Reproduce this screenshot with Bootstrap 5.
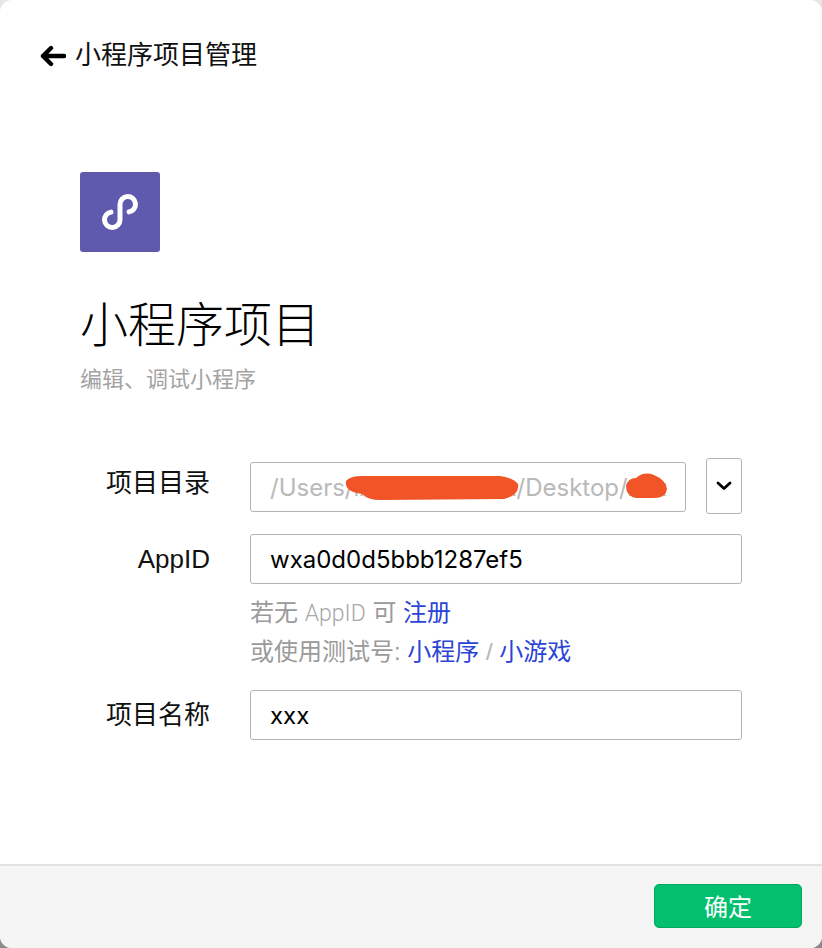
<!DOCTYPE html>
<html lang="zh-CN">
<head>
    <meta charset="UTF-8">
    <title>小程序项目管理</title>
    <meta name="viewport" content="width=device-width, initial-scale=1">
    <link href="https://cdn.jsdelivr.net/npm/bootstrap@5.3.0/dist/css/bootstrap.min.css" rel="stylesheet">
    <style>
        html, body {
            height: 100%;
        }
        body {
            background: linear-gradient(#e6e6e6 60%, #8a8a8a 100%);
            font-family: "Liberation Sans", "Noto Sans CJK SC", sans-serif;
            color: #000;
            overflow: hidden;
        }
        .app-window {
            height: 948px;
            background: #fff;
            border-radius: 12px;
            overflow: hidden;
        }
        .top-head {
            height: 108px;
            padding: 39px 0 0 40px;
            font-size: 26px;
            line-height: 32px;
            color: #111;
        }
        .top-head svg {
            width: 26px;
            height: 22px;
            margin: 6px 9px 0 0;
        }
        .hero {
            padding: 64px 0 0 80px;
        }
        .logo-tile {
            width: 80px;
            height: 80px;
            background: #5f5aad;
            border-radius: 3px;
        }
        .hero-title {
            font-size: 48px;
            line-height: 60px;
            font-weight: 300;
            margin: 44px 0 0;
        }
        .hero-sub {
            font-size: 22px;
            line-height: 30px;
            color: #a3a3a3;
            margin: 9px 0 0;
        }
        .form-area {
            padding: 64px 80px 0 0;
        }
        .field-row {
            min-height: 56px;
        }
        .field-label {
            width: 210px;
            margin: 0 40px 0 0;
            font-size: 26px;
            text-align: right;
            flex: none;
            color: #111;
        }
        .form-control.field-input {
            height: 50px;
            padding: 0 19px;
            font-family: Inter, "Noto Sans CJK SC", sans-serif;
            font-size: 24px;
            color: #000;
            border-color: #b4b4b4;
            border-radius: 3px;
            box-shadow: none;
        }
        .form-control.field-input:disabled {
            background: #fff;
            color: #b9b9b9;
            opacity: 1;
        }
        .path-box {
            width: 436px;
        }
        .scribble {
            position: absolute;
            left: 0;
            top: 0;
            width: 436px;
            height: 50px;
        }
        .drop-btn {
            width: 36px;
            height: 56px;
            margin: -1px 0 1px 20px;
            padding: 0;
            border: 1px solid #b4b4b4;
            border-radius: 3px;
            background: #fff;
        }
        .drop-btn svg {
            display: block;
            width: 16px;
            height: 10px;
            margin: 0 auto;
        }
        .hint-block {
            margin: 7px 0 16px 250px;
            font-size: 24px;
            line-height: 38px;
            color: #9a9a9a;
        }
        .hint-thin {
            font-family: Roboto, sans-serif;
            font-weight: 300;
            font-size: 23px;
            color: #a8a8a8;
        }
        .hint-block a {
            color: #2b44d6;
            text-decoration: none;
        }
        .hint-sep {
            color: #b5b5b5;
        }
        .bottom-bar {
            position: absolute;
            left: 0;
            right: 0;
            top: 864px;
            height: 84px;
            background: #f5f5f5;
            border-top: 2px solid #e2e2e2;
            padding: 18px 20px 0 0;
        }
        .btn.ok-btn {
            width: 148px;
            height: 44px;
            padding: 4px 0 0;
            font-size: 24px;
            color: #fff;
            background: #04bf6e;
            border: 1px solid #03a860;
            border-radius: 5px;
        }
    </style>
</head>
<body>

<div class="app-window position-relative">
    <!-- Header -->
    <div class="top-head d-flex align-items-start">
        <svg class="flex-shrink-0" viewBox="0 0 26 22" fill="none" stroke="#000" stroke-width="4.4" stroke-linecap="round" stroke-linejoin="round">
            <path d="M11 3 L3 11 L11 19 M3 11 H24"/>
        </svg>
        <span>小程序项目管理</span>
    </div>

    <!-- Logo and title -->
    <div class="hero">
        <div class="logo-tile d-flex align-items-center justify-content-center">
            <svg width="40" height="40" viewBox="0 0 40 40" fill="none" stroke="#fff" stroke-width="5" stroke-linecap="round">
                <path d="M11 20.1 A7.75 7.75 0 1 0 20 27.75 V12.25 A7.75 7.75 0 1 1 29 19.9"/>
            </svg>
        </div>
        <h1 class="hero-title">小程序项目</h1>
        <p class="hero-sub">编辑、调试小程序</p>
    </div>

    <!-- Form -->
    <form class="form-area">
        <div class="field-row d-flex align-items-center">
            <label class="field-label mb-2">项目目录</label>
            <div class="path-box position-relative">
                <input class="form-control field-input" type="text" value="/Users/ixxxxxxxxxxxx/Desktop/xxx" disabled>
                <svg class="scribble" viewBox="0 0 436 50">
                    <path fill="#f15527" d="M96 19 Q100 14 112 14 L250 14 Q264 16 268 22 Q270 33 254 37 L130 38 Q118 38 112 32 Q94 30 96 19 Z"/>
                    <path fill="#f15527" d="M376 24 Q378 16 386 16 Q394 9 404 13 Q416 18 417 27 Q416 36 404 36 L386 36 Q376 34 376 24 Z"/>
                </svg>
            </div>
            <button class="drop-btn" type="button">
                <svg viewBox="0 0 16 10" fill="none" stroke="#000" stroke-width="2.8" stroke-linecap="round" stroke-linejoin="round">
                    <path d="M2 2 L8 7.5 L14 2"/>
                </svg>
            </button>
        </div>
        <div class="field-row d-flex align-items-center mt-3">
            <label class="field-label">AppID</label>
            <input class="form-control field-input" type="text" value="wxa0d0d5bbb1287ef5">
        </div>
        <div class="hint-block">
            <div>若无 <span class="hint-thin">AppID</span> 可 <a href="#">注册</a></div>
            <div>或使用测试号: <a href="#">小程序</a> <span class="hint-sep">/</span> <a href="#">小游戏</a></div>
        </div>
        <div class="field-row d-flex align-items-center">
            <label class="field-label">项目名称</label>
            <input class="form-control field-input" type="text" value="xxx">
        </div>
    </form>

    <!-- Footer -->
    <div class="bottom-bar d-flex justify-content-end align-items-start">
        <button class="btn ok-btn" type="button">确定</button>
    </div>
</div>

</body>
</html>
